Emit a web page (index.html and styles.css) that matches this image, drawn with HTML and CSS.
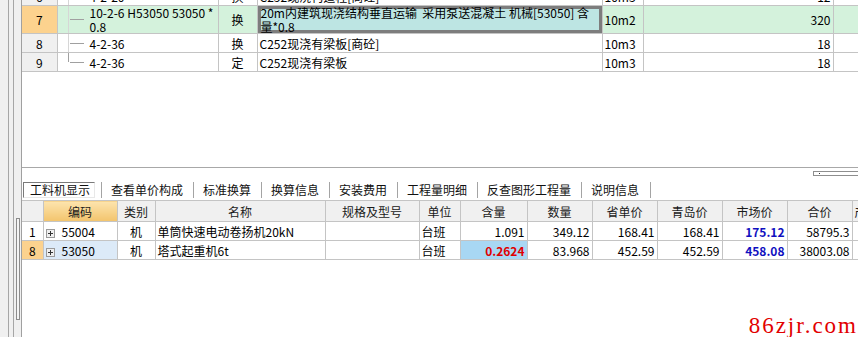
FILE: index.html
```html
<!DOCTYPE html>
<html lang="zh-CN">
<head>
  <meta charset="UTF-8">
  <title>工料机显示</title>
  <link rel="stylesheet" href="styles.css">
</head>
<body>

<div class="screen">
  <div class="side"><div class="grip"></div></div>

  <div class="main">
    <!-- 定额子目 -->
    <div class="upper">
      <table class="grid sub">
        <colgroup>
          <col style="width:35px"><col style="width:161px"><col style="width:39px">
          <col style="width:345px"><col style="width:41px"><col style="width:190px"><col style="width:60px">
        </colgroup>
        <tr class="cut">
          <td class="num">6</td>
          <td class="code line"><div class="node"><i class="twig"></i>4-2-20</div></td>
          <td class="kind">换</td>
          <td class="name">C252现浇构造柱[商砼]</td>
          <td class="unit">10m3</td>
          <td class="qty">12</td>
          <td></td>
        </tr>
        <tr class="cur">
          <td class="num">7</td>
          <td class="code line"><div class="node"><i class="twig"></i><span>10-2-6 H53050 53050 *<br>0.8</span></div></td>
          <td class="kind">换</td>
          <td class="name picked">20m内建筑现浇结构垂直运输&nbsp;&nbsp;采用泵送混凝土 机械[53050] 含<br>量*0.8</td>
          <td class="unit">10m2</td>
          <td class="qty">320</td>
          <td></td>
        </tr>
        <tr>
          <td class="num">8</td>
          <td class="code line"><div class="node"><i class="twig"></i>4-2-36</div></td>
          <td class="kind">换</td>
          <td class="name">C252现浇有梁板[商砼]</td>
          <td class="unit">10m3</td>
          <td class="qty">18</td>
          <td></td>
        </tr>
        <tr>
          <td class="num">9</td>
          <td class="code end"><div class="node"><i class="twig"></i>4-2-36</div></td>
          <td class="kind">定</td>
          <td class="name">C252现浇有梁板</td>
          <td class="unit">10m3</td>
          <td class="qty">18</td>
          <td></td>
        </tr>
      </table>
    </div>

    <!-- 标签页 -->
    <div class="strip">
      <div class="mini"><span class="mini-box"><i></i></span></div>
      <div class="tabs">
        <span class="tab on">工料机显示</span>
        <span class="tab">查看单价构成</span>
        <span class="tab">标准换算</span>
        <span class="tab">换算信息</span>
        <span class="tab">安装费用</span>
        <span class="tab">工程量明细</span>
        <span class="tab">反查图形工程量</span>
        <span class="tab last">说明信息</span>
      </div>
    </div>

    <!-- 工料机 -->
    <div class="lower">
      <table class="grid res">
        <colgroup>
          <col style="width:21px"><col style="width:74px"><col style="width:38px"><col style="width:170px">
          <col style="width:94px"><col style="width:41px"><col style="width:67px"><col style="width:65px">
          <col style="width:65px"><col style="width:65px"><col style="width:65px"><col style="width:65px"><col style="width:50px">
        </colgroup>
        <tr class="head">
          <th></th>
          <th class="sorted">编码</th>
          <th>类别</th>
          <th>名称</th>
          <th>规格及型号</th>
          <th>单位</th>
          <th>含量</th>
          <th>数量</th>
          <th>省单价</th>
          <th>青岛价</th>
          <th>市场价</th>
          <th>合价</th>
          <th class="clip">产地</th>
        </tr>
        <tr>
          <td class="num">1</td>
          <td class="rcode"><svg class="plus" width="9" height="9" viewBox="0 0 9 9"><rect x="0.5" y="0.5" width="8" height="8" fill="#efefef" stroke="#9a9a9a"/><path d="M2 4.5h5M4.5 2v5" stroke="#333"/></svg>55004</td>
          <td class="kind">机</td>
          <td class="name">单筒快速电动卷扬机20kN</td>
          <td></td>
          <td class="unit">台班</td>
          <td class="qty">1.091</td>
          <td class="qty">349.12</td>
          <td class="qty">168.41</td>
          <td class="qty">168.41</td>
          <td class="qty market">175.12</td>
          <td class="qty">58795.3</td>
          <td></td>
        </tr>
        <tr class="now">
          <td class="num">8</td>
          <td class="rcode"><svg class="plus" width="9" height="9" viewBox="0 0 9 9"><rect x="0.5" y="0.5" width="8" height="8" fill="#efefef" stroke="#9a9a9a"/><path d="M2 4.5h5M4.5 2v5" stroke="#333"/></svg>53050</td>
          <td class="kind">机</td>
          <td class="name">塔式起重机6t</td>
          <td></td>
          <td class="unit">台班</td>
          <td class="qty edit">0.2624</td>
          <td class="qty">83.968</td>
          <td class="qty">452.59</td>
          <td class="qty">452.59</td>
          <td class="qty market">458.08</td>
          <td class="qty">38003.08</td>
          <td></td>
        </tr>
      </table>
      <div class="mark">86zjr.com</div>
    </div>
  </div>
</div>

</body>
</html>
```

FILE: styles.css
```css
body {
  margin: 0;
  font-family: "Noto Sans CJK SC", sans-serif;
  font-size: 12px;
  color: #000;
  background-color: #fff;
  overflow: hidden;
}

.screen {
  display: flex;
  width: 858px;
  height: 337px;
  overflow: hidden;
}

/* left splitter strip */
.side {
  width: 21px;
  flex: none;
  background-color: #f0f0f0;
  background-image: linear-gradient(#a6a6a6, #a6a6a6), linear-gradient(#a6a6a6, #a6a6a6);
  background-size: 1px 100%;
  background-position: 8px 0, 13px 0;
  background-repeat: no-repeat;
}

.grip {
  margin: 218px 0 0 16px;
  width: 2px;
  height: 100px;
  border: 1px solid #8c8c8c;
  background-color: #f4f4f4;
}

.main {
  flex: 1;
  min-width: 0;
  display: flex;
  flex-direction: column;
  border-left: 1px solid #a0a0a0;
}

.upper {
  height: 167px;
  flex: none;
  overflow: hidden;
  border-bottom: 1px solid #a8a8a8;
}

/* grids */
.grid {
  border-collapse: collapse;
  table-layout: fixed;
  width: max-content;
}

.grid td,
.grid th {
  border: 1px solid #c4c4c4;
  padding: 0 2px;
  white-space: nowrap;
  overflow: hidden;
  line-height: 13px;
}

.grid tr > :first-child {
  border-left: none;
}

.sub {
  margin-top: -14px;
}

.sub tr {
  height: 19px;
}

.sub tr.cur {
  height: 28px;
}

.sub .cur td {
  line-height: 13.5px;
}

.sub .num {
  text-align: center;
  background-color: #f0f0f0;
}

.cur td {
  background-color: #d4f2dc;
}

.cur .num {
  background-color: #fcd28e;
}

.cur .picked {
  background-color: #bde5e3;
  box-shadow: inset 0 0 0 3px #7d7d7d;
  padding-left: 3px;
}

.code {
  padding: 0;
  background-repeat: no-repeat;
  background-position: 10px 0;
}

.code.line {
  background-image: linear-gradient(#d6d6d6, #d6d6d6);
  background-size: 1px 100%;
}

.code.end {
  background-image: linear-gradient(#a0a0a0, #a0a0a0);
  background-size: 1px 50%;
}

.cur .code.line {
  background-color: #d4f2dc;
}

.node {
  display: flex;
  align-items: center;
  padding-left: 10px;
}

.twig {
  width: 14px;
  height: 1px;
  background-color: #a0a0a0;
  margin-right: 6px;
  flex: none;
}

.kind {
  text-align: center;
}

.qty {
  text-align: right;
  padding-right: 4px;
}

/* tab strip */
.strip {
  height: 32px;
  flex: none;
}

.mini {
  display: flex;
  justify-content: flex-end;
  padding-top: 3px;
}

.mini-box {
  width: 44px;
  height: 3px;
  border: 1px solid #8e8e8e;
  border-right: none;
}

.mini-box i {
  display: block;
  width: 1px;
  height: 1px;
  margin: 1px 0 0 5px;
  background-color: #333;
}

.tabs {
  display: flex;
  margin-top: 6px;
  line-height: 16px;
  color: #111;
}

.tab {
  padding: 0 10px 0 9px;
  border-left: 1px solid #a4a4a4;
}

.tab.on {
  margin-left: 1px;
  margin-right: 6px;
  padding: 0 4px 0 6px;
  border: 1px solid;
  border-color: #7a7a7a #e8e8e8 #e8e8e8 #7a7a7a;
  line-height: 14px;
}

.tab.last {
  border-right: 1px solid #a4a4a4;
  padding-right: 11px;
}

/* resource grid */
.lower {
  flex: 1;
  display: flex;
  flex-direction: column;
  min-height: 0;
}

.res tr {
  height: 19px;
}

.res tr.head {
  height: 21px;
}

.res th {
  font-weight: normal;
  background-color: #f0f0f0;
  color: #1a1a1a;
  text-align: center;
}

.res th.sorted {
  background-image: linear-gradient(#fde4ae, #f3c46c);
}

.res th.clip {
  text-align: left;
}

.res .num {
  text-align: center;
}

.rcode {
  padding-left: 4px;
}

.plus {
  vertical-align: -1px;
  margin-right: 7px;
}

.now .num {
  background-color: #fcd28e;
}

.now .rcode {
  background-color: #dceaf8;
}

.edit {
  background-color: #a8d7f3;
  color: #e00000;
  font-weight: bold;
}

.market {
  color: #1010c0;
  font-weight: bold;
}

.mark {
  margin-top: auto;
  align-self: flex-end;
  font-family: "Liberation Serif", serif;
  font-size: 23px;
  letter-spacing: 2px;
  line-height: 23px;
  color: #e20000;
  background-color: #fff;
  padding-left: 10px;
}
```
